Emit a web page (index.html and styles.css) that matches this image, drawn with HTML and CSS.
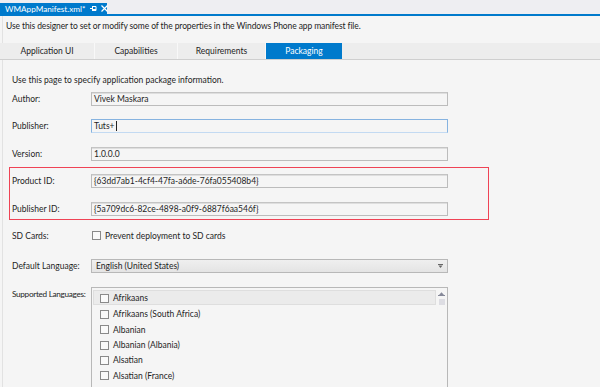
FILE: index.html
```html
<!DOCTYPE html>
<html>
<head>
<meta charset="utf-8">
<link rel="stylesheet" href="styles.css">
</head>
<body>
<div class="doc-tabs">
  <div class="doc-tab">
    <span class="doc-title">WMAppManifest.xml*</span>
    <svg class="pin" width="7" height="7" viewBox="0 0 7 7"><path d="M0 3.5H2.5M2.5 1V6M2.5 1.5H6V5.5H2.5M2.5 4.5H6" stroke="#fff" stroke-width="1" fill="none"/></svg>
    <svg class="close" width="7" height="7" viewBox="0 0 7 7"><path d="M0.5 0.5L6.5 6.5M6.5 0.5L0.5 6.5" stroke="#fff" stroke-width="1.2"/></svg>
  </div>
</div>
<div class="designer">
  <p class="hint">Use this designer to set or modify some of the properties in the Windows Phone app manifest file.</p>
  <div class="tabbar">
    <div class="tab t1">Application UI</div>
    <div class="tab t2">Capabilities</div>
    <div class="tab t3">Requirements</div>
    <div class="tab t4 active">Packaging</div>
  </div>
  <div class="page">
    <p class="intro">Use this page to specify application package information.</p>
    <div class="form">
      <label class="lbl">Author:</label>
      <div class="input">Vivek Maskara</div>
      <label class="lbl">Publisher:</label>
      <div class="input focus">Tuts+<span class="caret"></span></div>
      <label class="lbl">Version:</label>
      <div class="input">1.0.0.0</div>
      <label class="lbl">Product ID:</label>
      <div class="input">{63dd7ab1-4cf4-47fa-a6de-76fa055408b4}</div>
      <label class="lbl">Publisher ID:</label>
      <div class="input">{5a709dc6-82ce-4898-a0f9-6887f6aa546f}</div>
      <label class="lbl">SD Cards:</label>
      <div class="check-row"><span class="box"></span>Prevent deployment to SD cards</div>
      <label class="lbl spaced">Default Language:</label>
      <div class="select spaced">English (United States)<svg class="arrow" width="5" height="4" viewBox="0 0 5 4"><path d="M0 0.5H5" stroke="#666" stroke-width="1"/><path d="M0.5 1.5H4.5L2.5 4Z" fill="#666"/></svg></div>
      <label class="lbl top">Supported Languages:</label>
      <div class="listbox">
        <div class="items">
          <div class="item sel"><span class="box"></span>Afrikaans</div>
          <div class="item"><span class="box"></span>Afrikaans (South Africa)</div>
          <div class="item"><span class="box"></span>Albanian</div>
          <div class="item"><span class="box"></span>Albanian (Albania)</div>
          <div class="item"><span class="box"></span>Alsatian</div>
          <div class="item"><span class="box"></span>Alsatian (France)</div>
        </div>
        <div class="scroll">
          <svg width="7" height="5" viewBox="0 0 7 5"><path d="M1 4H6L3.5 1.2Z" fill="#868999"/><path d="M0 4.5H7" stroke="#868999"/></svg>
          <span class="thumb"></span>
        </div>
      </div>
    </div>
    <div class="highlight"></div>
  </div>
</div>
</body>
</html>
```
FILE: styles.css
```css
html, body {
  margin: 0;
  padding: 0;
}
body {
  width: 600px;
  height: 387px;
  overflow: hidden;
  background: #f5f5f5;
  font-family: "Lato", "Liberation Sans", Arial, sans-serif;
  font-size: 8.5px;
  color: #1e1e1e;
}
.doc-tabs {
  height: 11px;
  padding-top: 3px;
  background: #eeeef2;
  border-bottom: 2px solid #007acc;
  display: flex;
}
.doc-tab {
  width: 107px;
  height: 11px;
  background: #007acc;
  color: #fff;
  display: flex;
  align-items: center;
  padding-left: 5px;
  box-sizing: border-box;
  white-space: nowrap;
}
.doc-title {
  font-size: 8.2px;
}
.pin {
  margin-left: 5px;
  flex: none;
}
.close {
  margin-left: 4px;
  flex: none;
}
.designer {
  border-left: 1px solid #e2e2e2;
  margin-left: 2px;
  height: 371px;
}
.hint {
  margin: 0;
  height: 27px;
  line-height: 21px;
  padding-left: 3px;
  box-sizing: border-box;
  letter-spacing: -0.1px;
}
.tabbar {
  display: flex;
  height: 16px;
  background: #ededed;
  border-bottom: 1px solid #cfcfcf;
  margin-left: -3px;
}
.tab {
  display: flex;
  align-items: center;
  justify-content: center;
  border-right: 1px solid #f8f8f8;
  color: #1e1e1e;
  box-sizing: border-box;
}
.t1 { width: 95px; }
.t2 { width: 83px; }
.t3 { width: 88px; }
.t4 { width: 76px; }
.tab.active {
  background: #007acc;
  color: #fff;
  border-right: none;
}
.page {
  position: relative;
  padding-left: 9px;
}
.intro {
  margin: 0;
  height: 32px;
  line-height: 40px;
}
.form {
  display: grid;
  grid-template-columns: 79px 357px;
  row-gap: 13.4px;
  align-items: center;
}
.lbl {
  white-space: nowrap;
  line-height: 14px;
}
.spaced {
  margin-top: 3px;
}
.lbl.top {
  align-self: start;
  padding-top: 0;
  font-size: 8.2px;
  letter-spacing: -0.3px;
}
.input {
  height: 14px;
  box-sizing: border-box;
  border: 1px solid #bcbcbc;
  border-top-color: #c4c4c4;
  box-shadow: inset 0 1px 0 #dedede;
  background: #f5f5f5;
  padding-left: 2px;
  line-height: 12px;
  white-space: nowrap;
}
.input.focus {
  border-color: #86b3e0;
  border-bottom-color: #c3daf2;
  box-shadow: none;
}
.caret {
  display: inline-block;
  width: 1px;
  height: 10px;
  background: #222;
  vertical-align: -2px;
  margin-left: 1px;
}
.check-row {
  display: flex;
  align-items: center;
  height: 14px;
}
.box {
  width: 7px;
  height: 7px;
  border: 1px solid #8a8a8a;
  background: #fafafa;
  margin-right: 4px;
  flex: none;
}
.check-row .box {
  margin-left: 1px;
  margin-right: 4px;
}
.select {
  height: 14px;
  box-sizing: border-box;
  border: 1px solid #b8b8b8;
  background: linear-gradient(#efefef, #e4e4e4);
  padding-left: 4px;
  padding-right: 4px;
  line-height: 12px;
  display: flex;
  align-items: center;
  justify-content: space-between;
}
.listbox {
  height: 110px;
  box-sizing: border-box;
  border: 1px solid #b8b8b8;
  border-bottom: none;
  display: flex;
}
.items {
  flex: 1;
  padding: 2px 0 0 1px;
}
.item {
  height: 15.4px;
  display: flex;
  align-items: center;
  padding-left: 7px;
  padding-top: 3px;
  box-sizing: border-box;
  white-space: nowrap;
}
.item.sel {
  background: #ebebeb;
  border: 1px solid #dedede;
  padding-left: 6px;
  padding-top: 2px;
}
.scroll {
  width: 11px;
  display: flex;
  flex-direction: column;
  align-items: center;
  padding-top: 3px;
}
.thumb {
  width: 6px;
  height: 6px;
  background: #dddde3;
  margin-top: 3px;
}
.highlight {
  position: absolute;
  left: 6px;
  top: 107px;
  width: 478px;
  height: 51px;
  border: 1px solid #ef4355;
  pointer-events: none;
}
```
